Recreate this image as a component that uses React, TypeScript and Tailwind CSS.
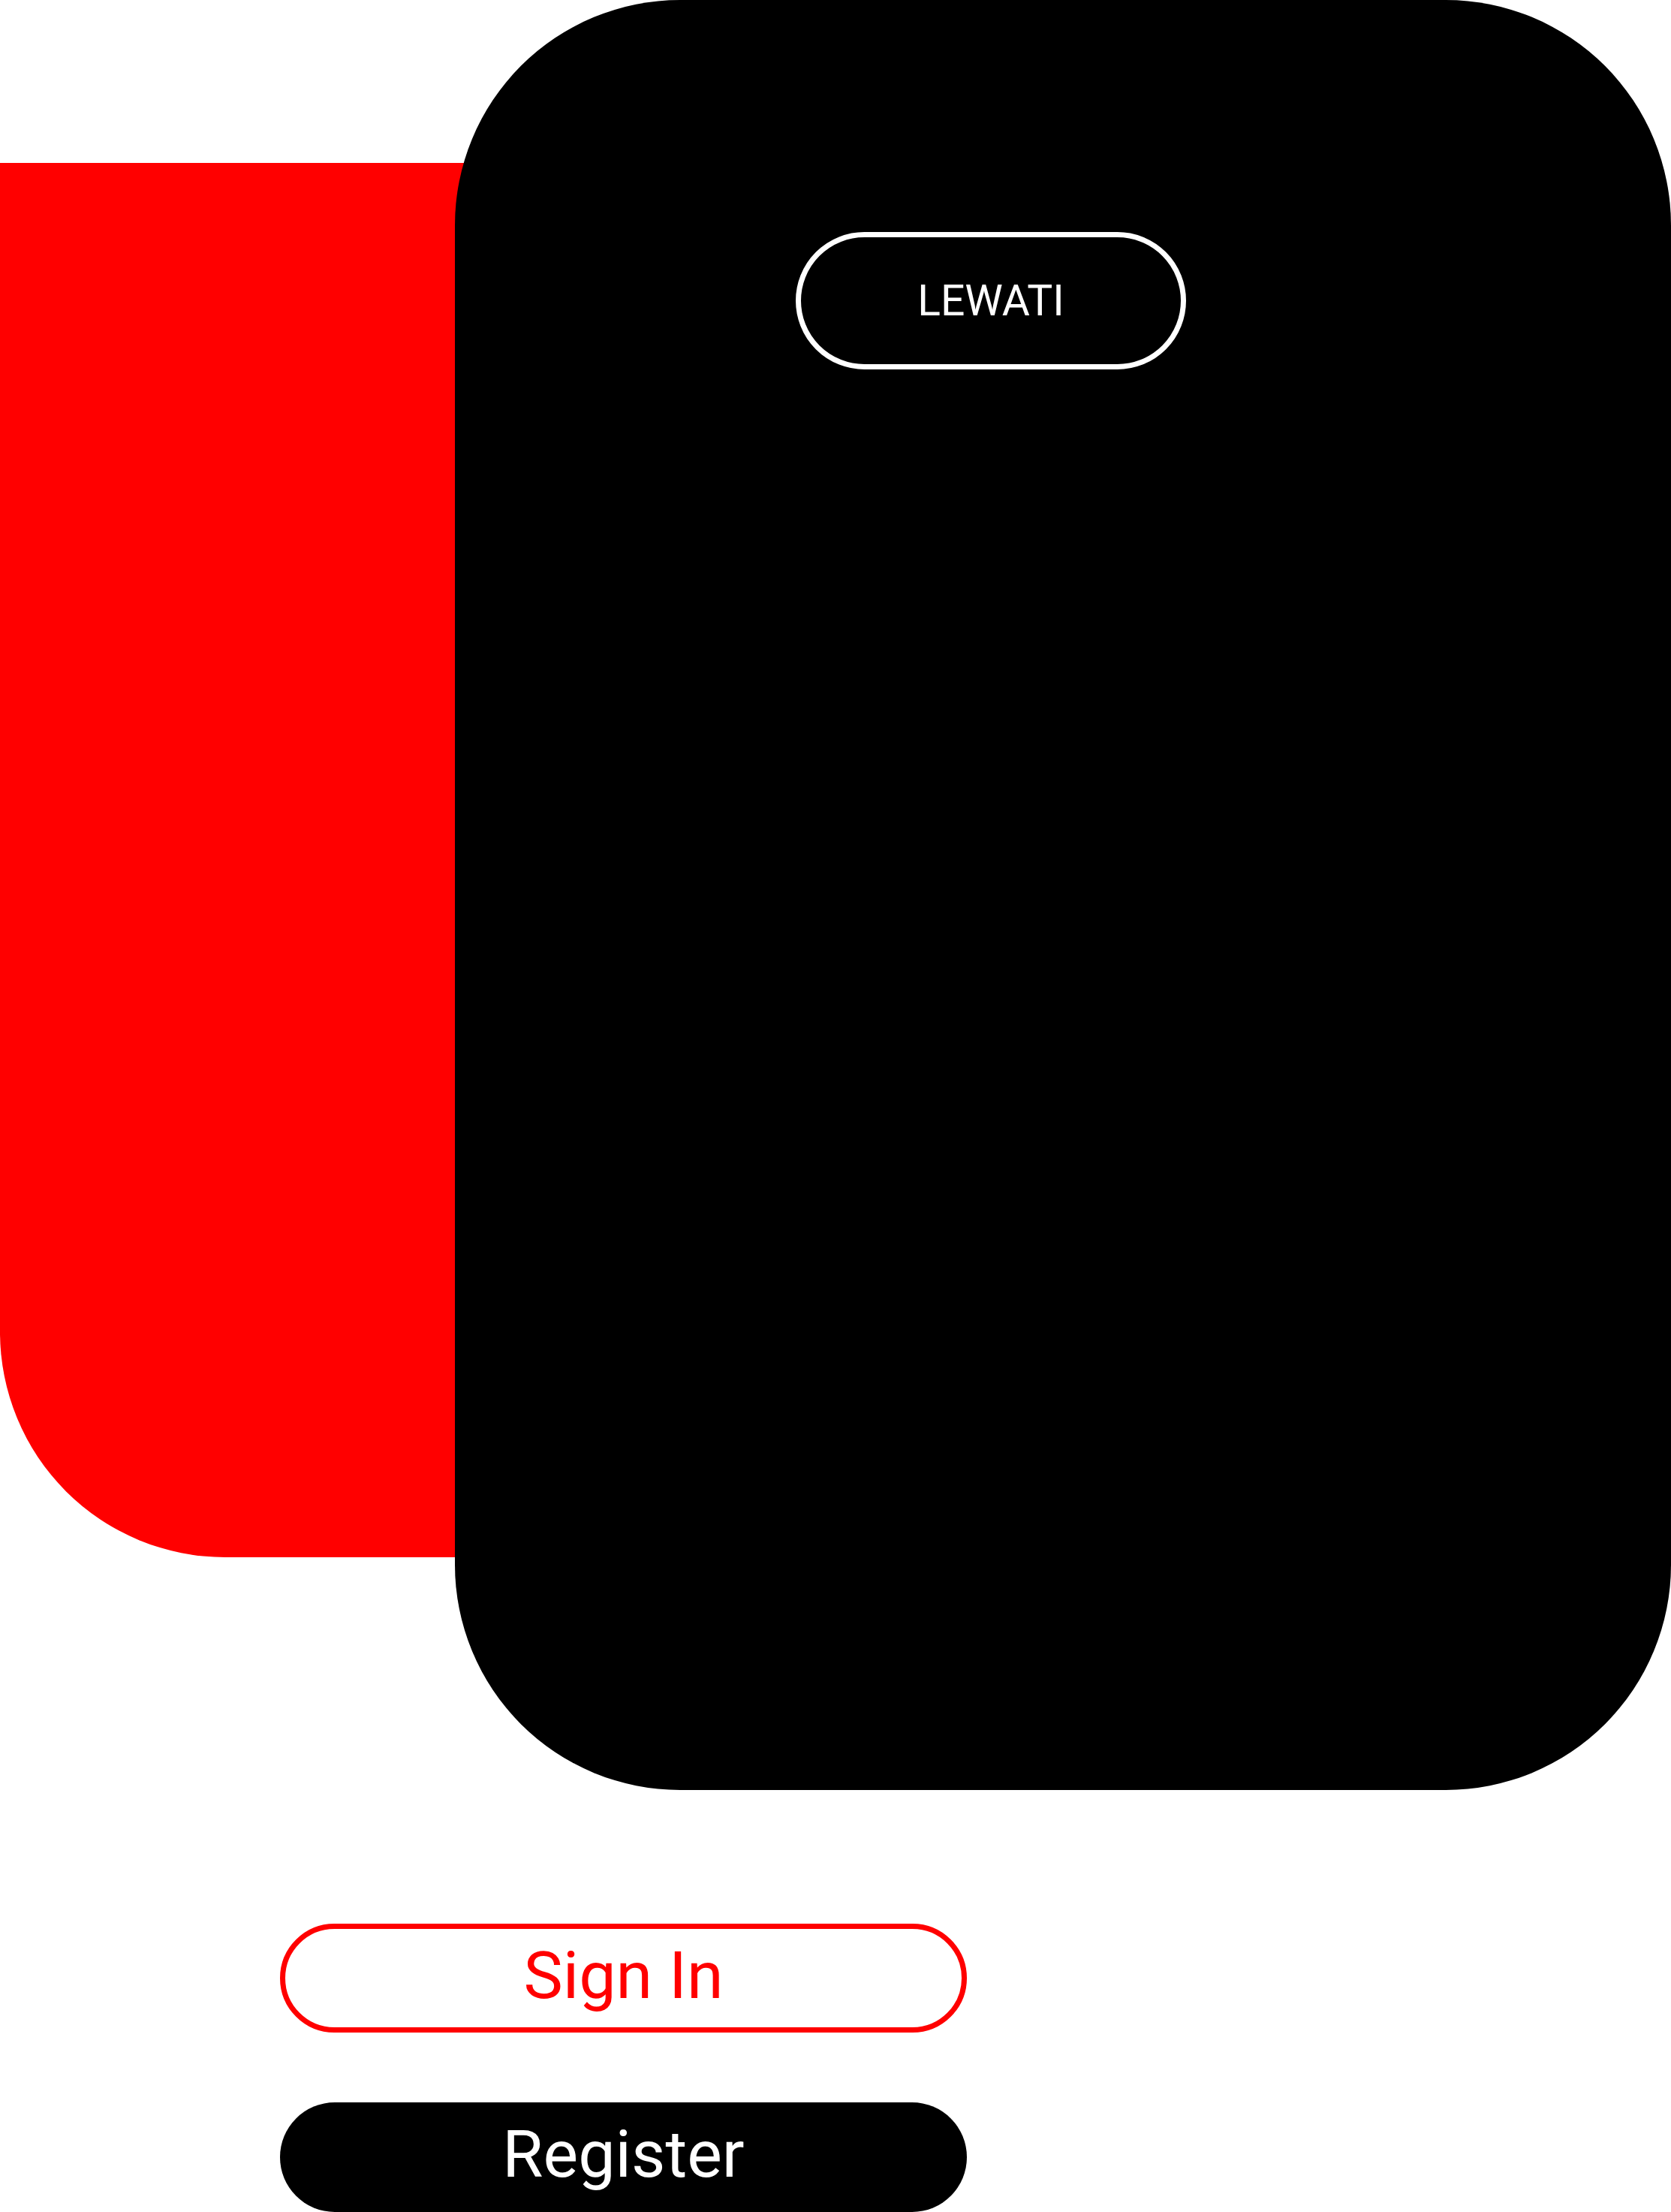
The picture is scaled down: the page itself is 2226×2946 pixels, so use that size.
const font = { fontFamily: 'Roboto, "Noto Sans", sans-serif' };

const OutlineButton = ({ label }: { label: string }) => (
  <button className="flex items-center justify-center w-[915px] h-[145px] rounded-full border-[7px] border-[#ff0000] bg-white text-[#ff0000] text-[88px] leading-none pb-[8px]">
    {label}
  </button>
);

const SolidButton = ({ label }: { label: string }) => (
  <button className="flex items-center justify-center w-[915px] h-[146px] rounded-full bg-black text-white text-[88px] leading-none pb-[8px]">
    {label}
  </button>
);

export default function App() {
  return (
    <div
      className="flex flex-col w-full h-[2946px] bg-white overflow-hidden"
      style={font}
    >
      <div className="relative h-[2384px] shrink-0">
        {/* red panel sitting behind the card */}
        <div className="absolute left-0 top-[217px] w-[900px] h-[1857px] bg-[#ff0000] rounded-bl-[300px]" />
        <div className="relative ml-[606px] w-[1620px] h-[2384px] bg-black rounded-[300px] pt-[309px] pl-[454px]">
          <button className="flex items-center justify-center w-[520px] h-[183px] rounded-full border-[7px] border-white text-white text-[57px] leading-none">
            LEWATI
          </button>
        </div>
      </div>
      <div className="flex flex-col gap-[93px] pl-[373px] pt-[178px]">
        <OutlineButton label="Sign In" />
        <SolidButton label="Register" />
      </div>
    </div>
  );
}
